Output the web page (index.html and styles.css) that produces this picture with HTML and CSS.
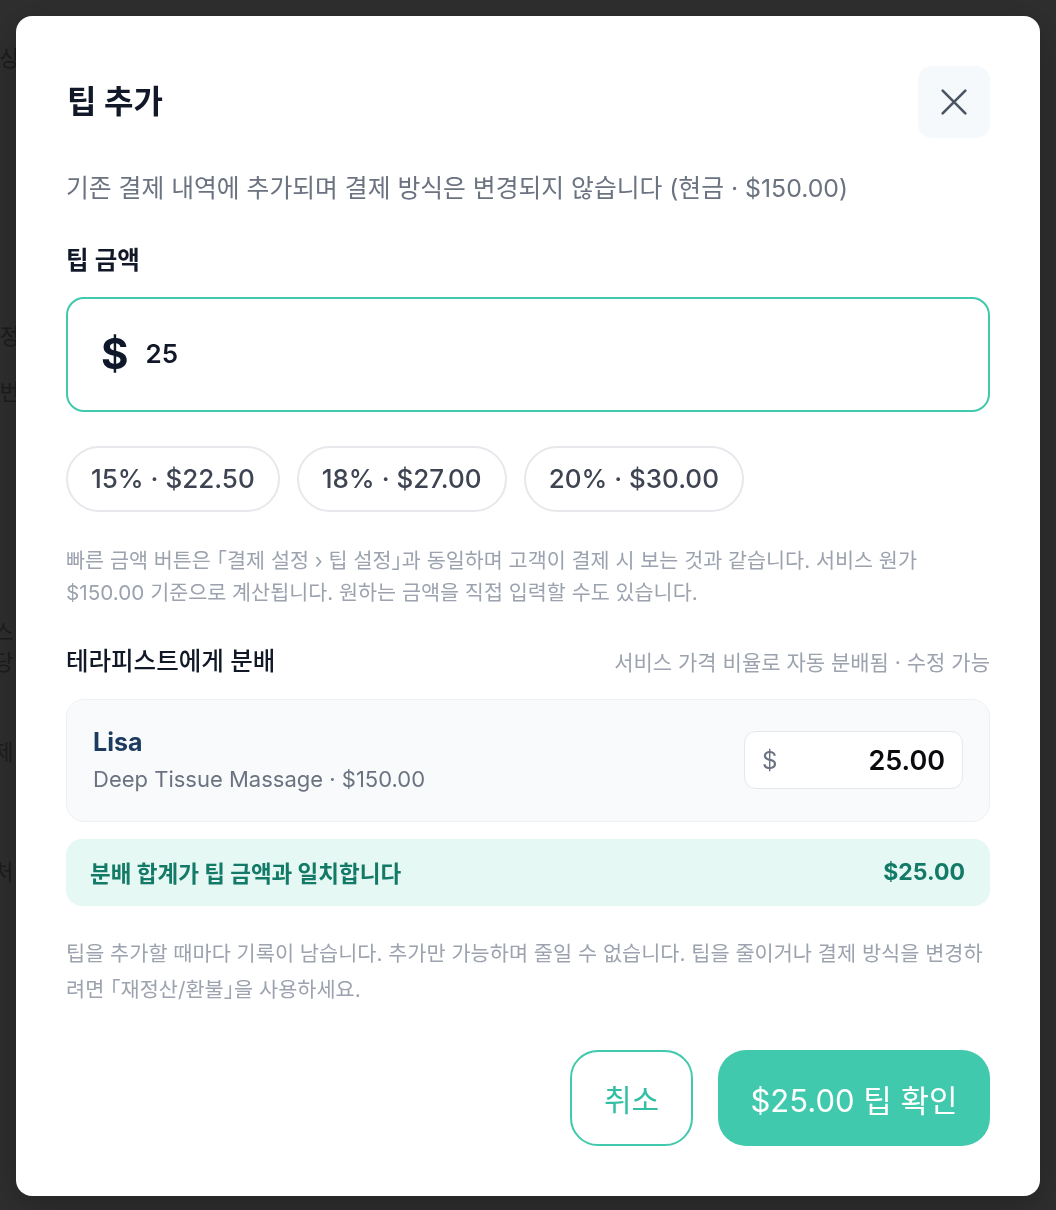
FILE: index.html
```html
<!DOCTYPE html>
<html lang="ko">
<head>
<meta charset="utf-8">
<title>팁 추가</title>
<link rel="stylesheet" href="styles.css">
</head>
<body>
<div class="page">
  <div class="bg-row r1"><span>결제 상세</span></div>
  <div class="bg-row r2"><span>고객 정보</span></div>
  <div class="bg-row r3"><span>전화 번호</span></div>
  <div class="bg-row r4"><span>서비스 보</span></div>
  <div class="bg-row r5"><span>담당 호</span></div>
  <div class="bg-row r6"><span>결제 선</span></div>
  <div class="bg-row r7"><span>연락처 호</span></div>
</div>
<div class="overlay">
  <div class="modal">
    <div class="head">
      <h2 class="title">팁 추가</h2>
      <button class="close" type="button" aria-label="닫기">
        <svg width="32" height="32" viewBox="0 0 24 24" fill="none" stroke="currentColor" stroke-width="2" stroke-linecap="round"><path d="M3.5 3.5 L20.5 20.5 M20.5 3.5 L3.5 20.5"/></svg>
      </button>
    </div>
    <p class="subtitle">기존 결제 내역에 추가되며 결제 방식은 변경되지 않습니다 (현금 · $150.00)</p>
    <div class="label">팁 금액</div>
    <div class="amount"><span class="cur">$</span><span class="val">25</span></div>
    <div class="chips">
      <button class="chip" type="button">15% · $22.50</button>
      <button class="chip" type="button">18% · $27.00</button>
      <button class="chip" type="button">20% · $30.00</button>
    </div>
    <p class="help">빠른 금액 버튼은 「결제 설정 › 팁 설정」과 동일하며 고객이 결제 시 보는 것과 같습니다. 서비스 원가 $150.00 기준으로 계산됩니다. 원하는 금액을 직접 입력할 수도 있습니다.</p>
    <div class="sec-head">
      <span class="sec-title">테라피스트에게 분배</span>
      <span class="sec-note">서비스 가격 비율로 자동 분배됨 · 수정 가능</span>
    </div>
    <div class="card">
      <div class="who">
        <div class="name">Lisa</div>
        <div class="detail">Deep Tissue Massage · $150.00</div>
      </div>
      <div class="split"><span class="split-cur">$</span><span class="split-val">25.00</span></div>
    </div>
    <div class="match">
      <span>분배 합계가 팁 금액과 일치합니다</span>
      <span class="match-sum">$25.00</span>
    </div>
    <p class="note">팁을 추가할 때마다 기록이 남습니다. 추가만 가능하며 줄일 수 없습니다. 팁을 줄이거나 결제 방식을 변경하려면 「재정산/환불」을 사용하세요.</p>
    <div class="actions">
      <button class="btn-cancel" type="button">취소</button>
      <button class="btn-confirm" type="button">$25.00 팁 확인</button>
    </div>
  </div>
</div>
</body>
</html>
```

FILE: styles.css
```css
* { box-sizing: border-box; }
html, body { margin: 0; padding: 0; }
body {
  background: #2f2f2f;
  font-family: Inter, "Noto Sans CJK KR", sans-serif;
  color: #111827;
  width: 1056px;
  height: 1210px;
  overflow: hidden;
}

.page {
  display: flex;
  flex-direction: column;
  width: 40px;
  padding-top: 40px;
  color: #1c1c1c;
  font-size: 22px;
}
.bg-row {
  display: flex;
  justify-content: flex-end;
  width: 40px;
  height: 30px;
  overflow: hidden;
  white-space: nowrap;
  opacity: 0.9;
}
.bg-row span { flex: none; }
.r1 { margin-top: 0; }
.r2 { margin-top: 248px; }
.r3 { margin-top: 26px; }
.r4 { margin-top: 210px; }
.r5 { margin-top: 0; }
.r6 { margin-top: 60px; }
.r7 { margin-top: 90px; }

.overlay {
  position: fixed;
  inset: 0;
  display: flex;
  justify-content: center;
  align-items: flex-start;
  padding-top: 16px;
}

.modal {
  width: 1024px;
  height: 1180px;
  background: #ffffff;
  border-radius: 16px;
  padding: 50px;
  display: flex;
  flex-direction: column;
  box-shadow: 0 10px 40px rgba(0,0,0,0.25);
}

.head {
  display: flex;
  justify-content: space-between;
  align-items: center;
  height: 72px;
}
.title {
  margin: 0;
  font-size: 32px;
  font-weight: 700;
  line-height: 40px;
  color: #111827;
  padding-left: 1px;
}
.close {
  width: 72px;
  height: 72px;
  border: none;
  border-radius: 14px;
  background: #f6f9fc;
  color: #4b5563;
  display: flex;
  align-items: center;
  justify-content: center;
  padding: 0;
}

.subtitle {
  margin: 34px 0 0;
  font-size: 24.8px;
  line-height: 32px;
  color: #6b7280;
}

.label {
  margin-top: 40px;
  font-size: 24.5px;
  line-height: 32px;
  font-weight: 600;
  color: #111827;
}

.amount {
  margin-top: 21px;
  height: 116px;
  border: 2px solid #41c9ad;
  border-radius: 18px;
  display: flex;
  align-items: center;
  gap: 17px;
  padding: 0 33px;
}
.cur {
  font-size: 42px;
  font-weight: 700;
  color: #0f172a;
  line-height: 1;
}
.val {
  font-size: 26px;
  font-weight: 600;
  color: #111827;
  line-height: 1;
}

.chips {
  margin-top: 34px;
  display: flex;
  gap: 17px;
}
.chip {
  font-family: inherit;
  font-size: 26px;
  font-weight: 500;
  line-height: 32px;
  color: #3f4452;
  background: #ffffff;
  border: 2px solid #e7e8eb;
  border-radius: 999px;
  padding: 15px 23px;
}

.help {
  margin: 33px 0 0;
  font-size: 20.7px;
  line-height: 32px;
  color: #9ca3af;
  font-feature-settings: "halt";
}

.sec-head {
  margin-top: 36px;
  display: flex;
  justify-content: space-between;
  align-items: baseline;
  line-height: 32px;
}
.sec-title {
  font-size: 24.5px;
  font-weight: 500;
  color: #111827;
}
.sec-note {
  font-size: 21px;
  color: #9ca3af;
}

.card {
  margin-top: 20px;
  min-height: 123px;
  background: #f8fafc;
  border: 1px solid #eef1f4;
  border-radius: 18px;
  padding: 0 26px;
  display: flex;
  align-items: center;
  justify-content: space-between;
}
.who { display: flex; flex-direction: column; gap: 7px; }
.name {
  font-size: 25px;
  font-weight: 700;
  line-height: 30px;
  color: #1c3b5e;
}
.detail {
  font-size: 22px;
  line-height: 30px;
  color: #6b7280;
}
.split {
  width: 219px;
  height: 58px;
  background: #ffffff;
  border: 1.5px solid #e5e7eb;
  border-radius: 12px;
  padding: 0 17px;
  display: flex;
  align-items: center;
  justify-content: space-between;
}
.split-cur {
  font-size: 24px;
  color: #6b7280;
}
.split-val {
  font-size: 27px;
  font-weight: 600;
  color: #0b0b0f;
}

.match {
  margin-top: 17px;
  height: 68px;
  background: #e6f8f3;
  border-radius: 16px;
  padding: 0 25px 0 24px;
  display: flex;
  align-items: center;
  justify-content: space-between;
  color: #127a66;
  font-size: 22.5px;
  font-weight: 700;
}
.match-sum { font-size: 23px; }

.note {
  margin: 30px 0 0;
  font-size: 20.8px;
  line-height: 36px;
  color: #9ca3af;
  font-feature-settings: "halt";
}

.actions {
  margin-top: 42px;
  display: flex;
  justify-content: flex-end;
  gap: 25px;
}
.btn-cancel, .btn-confirm {
  font-family: inherit;
  font-weight: 400;
  height: 96px;
  border-radius: 28px;
}
.btn-cancel {
  width: 123px;
  font-size: 30px;
  background: #ffffff;
  color: #33bfa3;
  border: 2px solid #41c9ad;
}
.btn-confirm {
  width: 272px;
  font-size: 31px;
  background: #41c9ad;
  color: #ffffff;
  border: none;
}
```
